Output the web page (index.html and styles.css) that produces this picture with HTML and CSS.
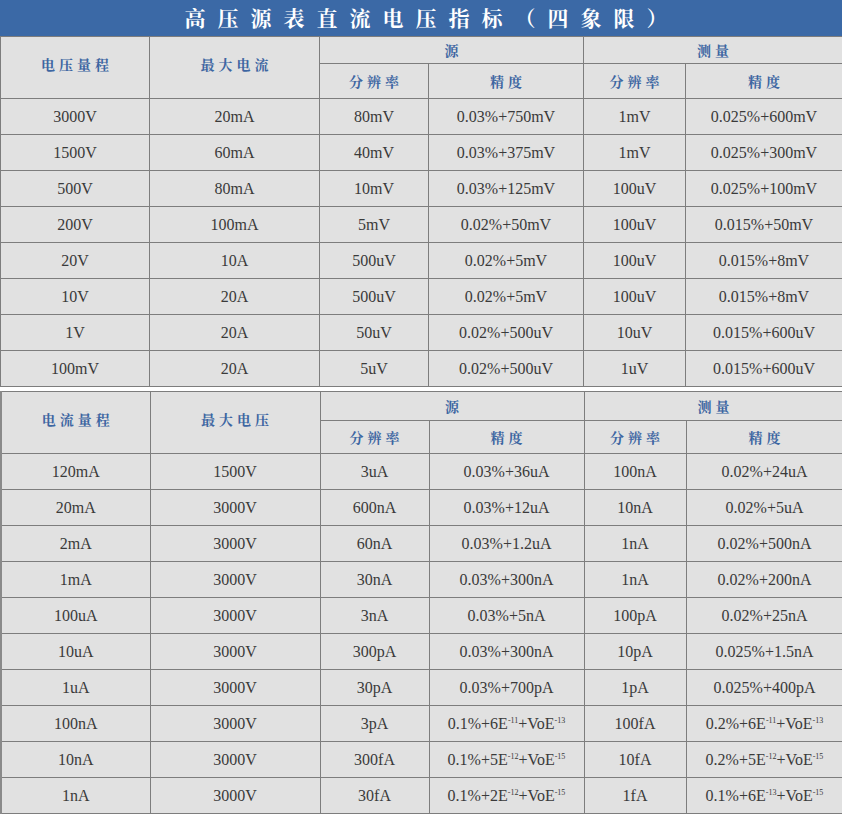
FILE: index.html
```html
<!DOCTYPE html>
<html lang="zh">
<head>
<meta charset="utf-8">
<link rel="stylesheet" href="styles.css">
</head>
<body>
<div class="title">高压源表直流电压指标（四象限）</div>
<table class="spec">
  <colgroup><col class="c1"><col class="c2"><col class="c3"><col class="c4"><col class="c5"><col class="c6"></colgroup>
  <tr class="h1">
    <th rowspan="2">电压量程</th><th rowspan="2">最大电流</th>
    <th colspan="2">源</th><th colspan="2">测量</th>
  </tr>
  <tr class="h2"><th>分辨率</th><th>精度</th><th>分辨率</th><th>精度</th></tr>
  <tr><td>3000V</td><td>20mA</td><td>80mV</td><td>0.03%+750mV</td><td>1mV</td><td>0.025%+600mV</td></tr>
  <tr><td>1500V</td><td>60mA</td><td>40mV</td><td>0.03%+375mV</td><td>1mV</td><td>0.025%+300mV</td></tr>
  <tr><td>500V</td><td>80mA</td><td>10mV</td><td>0.03%+125mV</td><td>100uV</td><td>0.025%+100mV</td></tr>
  <tr><td>200V</td><td>100mA</td><td>5mV</td><td>0.02%+50mV</td><td>100uV</td><td>0.015%+50mV</td></tr>
  <tr><td>20V</td><td>10A</td><td>500uV</td><td>0.02%+5mV</td><td>100uV</td><td>0.015%+8mV</td></tr>
  <tr><td>10V</td><td>20A</td><td>500uV</td><td>0.02%+5mV</td><td>100uV</td><td>0.015%+8mV</td></tr>
  <tr><td>1V</td><td>20A</td><td>50uV</td><td>0.02%+500uV</td><td>10uV</td><td>0.015%+600uV</td></tr>
  <tr><td>100mV</td><td>20A</td><td>5uV</td><td>0.02%+500uV</td><td>1uV</td><td>0.015%+600uV</td></tr>
</table>
<table class="spec second">
  <colgroup><col class="c1"><col class="c2"><col class="c3"><col class="c4"><col class="c5"><col class="c6"></colgroup>
  <tr class="h1">
    <th rowspan="2">电流量程</th><th rowspan="2">最大电压</th>
    <th colspan="2">源</th><th colspan="2">测量</th>
  </tr>
  <tr class="h2"><th>分辨率</th><th>精度</th><th>分辨率</th><th>精度</th></tr>
  <tr><td>120mA</td><td>1500V</td><td>3uA</td><td>0.03%+36uA</td><td>100nA</td><td>0.02%+24uA</td></tr>
  <tr><td>20mA</td><td>3000V</td><td>600nA</td><td>0.03%+12uA</td><td>10nA</td><td>0.02%+5uA</td></tr>
  <tr><td>2mA</td><td>3000V</td><td>60nA</td><td>0.03%+1.2uA</td><td>1nA</td><td>0.02%+500nA</td></tr>
  <tr><td>1mA</td><td>3000V</td><td>30nA</td><td>0.03%+300nA</td><td>1nA</td><td>0.02%+200nA</td></tr>
  <tr><td>100uA</td><td>3000V</td><td>3nA</td><td>0.03%+5nA</td><td>100pA</td><td>0.02%+25nA</td></tr>
  <tr><td>10uA</td><td>3000V</td><td>300pA</td><td>0.03%+300nA</td><td>10pA</td><td>0.025%+1.5nA</td></tr>
  <tr><td>1uA</td><td>3000V</td><td>30pA</td><td>0.03%+700pA</td><td>1pA</td><td>0.025%+400pA</td></tr>
  <tr><td>100nA</td><td>3000V</td><td>3pA</td><td>0.1%+6E<sup>-11</sup>+VoE<sup>-13</sup></td><td>100fA</td><td>0.2%+6E<sup>-11</sup>+VoE<sup>-13</sup></td></tr>
  <tr><td>10nA</td><td>3000V</td><td>300fA</td><td>0.1%+5E<sup>-12</sup>+VoE<sup>-15</sup></td><td>10fA</td><td>0.2%+5E<sup>-12</sup>+VoE<sup>-15</sup></td></tr>
  <tr><td>1nA</td><td>3000V</td><td>30fA</td><td>0.1%+2E<sup>-12</sup>+VoE<sup>-15</sup></td><td>1fA</td><td>0.1%+6E<sup>-13</sup>+VoE<sup>-15</sup></td></tr>
</table>
</body>
</html>
```
FILE: styles.css
```css
html, body {
  margin: 0;
  padding: 0;
  background: #ffffff;
}
body {
  width: 842px;
  overflow: hidden;
}
.title {
  height: 36px;
  background: #3b69a6;
  color: #ffffff;
  font-family: "Noto Serif CJK SC", "Noto Sans CJK SC", serif;
  font-weight: 700;
  font-size: 21px;
  line-height: 34px;
  letter-spacing: 12px;
  text-align: center;
  padding-left: 22px;
  box-sizing: border-box;
}
.spec {
  width: 842px;
  table-layout: fixed;
  border-collapse: collapse;
  background: #e1e1e1;
}
.second {
  margin-top: 4px;
}
.c1 { width: 149px; }
.c2 { width: 170px; }
.c3 { width: 109px; }
.c4 { width: 155px; }
.c5 { width: 102px; }
.c6 { width: 157px; }
.spec th, .spec td {
  border: 1px solid #7d7d7d;
  padding: 0;
  text-align: center;
  vertical-align: middle;
}
.spec th {
  color: #3d66a2;
  font-family: "Noto Serif CJK SC", "Noto Sans CJK SC", serif;
  font-weight: 700;
  font-size: 14px;
  letter-spacing: 4px;
  text-indent: 4px;
}
.spec tr.h1 th[rowspan] {
  padding-bottom: 8px;
}
.spec tr.h1 { height: 27px; }
.spec tr.h2 { height: 35px; }
.second tr.h1 { height: 29px; }
.second tr.h2 { height: 33px; }
.spec td {
  height: 35px;
  color: #3a3a3a;
  font-family: "Liberation Serif", serif;
  font-size: 16px;
}
.second tr:first-child th:first-child,
.second td:first-child {
  border-left: 2px solid #8a8a8a;
}
.spec sup {
  font-size: 8px;
  vertical-align: 6px;
  line-height: 0;
}
```
